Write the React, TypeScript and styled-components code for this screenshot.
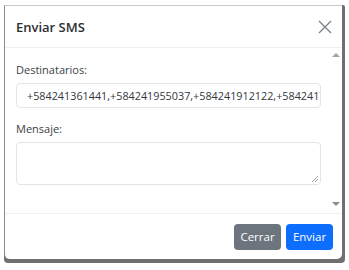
import React from 'react'
import styled, { createGlobalStyle } from 'styled-components'

const GlobalStyle = createGlobalStyle`
  html, body {
    margin: 0;
    padding: 0;
    background: #ffffff;
    font-family: 'Open Sans', 'Noto Sans', sans-serif;
    color: #212529;
  }
`

const Page = styled.div`
  width: 349px;
  height: 270px;
  padding: 5px 0 0 4px;
  box-sizing: border-box;
`

const Frame = styled.div`
  width: 341px;
  height: 258px;
  background: #6f6f6f;
  border-radius: 0 2px 4px 4px;
`

const Modal = styled.div`
  width: 338px;
  height: 254px;
  background: #ffffff;
  border-left: 1px solid #8a8a8a;
  border-top: 1px solid #c8c8c8;
  border-radius: 0 0 5px 5px;
  box-sizing: border-box;
  display: flex;
  flex-direction: column;
`

const Header = styled.div`
  height: 41px;
  flex: none;
  display: flex;
  align-items: center;
  justify-content: space-between;
  padding: 0 9px 0 11px;
  border-bottom: 1px solid #eef0f2;
`

const Title = styled.h5`
  margin: 0;
  font-size: 13px;
  font-weight: 600;
  color: #2b2f33;
`

const CloseButton = styled.button`
  width: 16px;
  height: 16px;
  padding: 0;
  border: none;
  background: transparent;
  display: flex;
  align-items: center;
  justify-content: center;
`

const Body = styled.div`
  flex: 1;
  display: flex;
  min-height: 0;
`

const Content = styled.div`
  flex: 1;
  min-width: 0;
  padding: 15px 9px 0 11px;
  display: flex;
  flex-direction: column;
`

const Label = styled.label`
  font-size: 11px;
  color: #3a3f44;
  margin-bottom: 6px;
  line-height: 14px;
`

const Input = styled.div`
  height: 25px;
  border: 1px solid #e2e5e8;
  border-radius: 4px;
  box-sizing: border-box;
  padding: 0 0 0 10px;
  font-size: 10.8px;
  color: #33383d;
  display: flex;
  align-items: center;
  white-space: nowrap;
  overflow: hidden;
  margin-bottom: 14px;
`

const TextArea = styled.div`
  position: relative;
  height: 43px;
  border: 1px solid #e2e5e8;
  border-radius: 4px;
  box-sizing: border-box;
`

const Grip = styled.svg`
  position: absolute;
  right: 2px;
  bottom: 2px;
`

const ScrollRail = styled.div`
  width: 12px;
  flex: none;
  display: flex;
  flex-direction: column;
  justify-content: space-between;
  align-items: center;
  padding: 5px 0 7px;
  box-sizing: border-box;
  background: #ffffff;
`

const Arrow = styled.div<{ $down?: boolean }>`
  width: 0;
  height: 0;
  border-left: 4px solid transparent;
  border-right: 4px solid transparent;
  ${(p) =>
    p.$down
      ? 'border-top: 4px solid #8d8d8d;'
      : 'border-bottom: 4px solid #a3a3a3;'}
`

const Footer = styled.div`
  height: 46px;
  flex: none;
  border-top: 1px solid #eef0f2;
  display: flex;
  align-items: center;
  justify-content: flex-end;
  gap: 5px;
  padding: 0 9px 0 0;
  box-sizing: border-box;
`

const Button = styled.button<{ $variant: 'secondary' | 'primary' }>`
  height: 26px;
  width: 47px;
  border: none;
  border-radius: 4px;
  color: #ffffff;
  font-family: 'Open Sans', 'Noto Sans', sans-serif;
  font-size: 11.5px;
  padding: 0;
  background: ${(p) => (p.$variant === 'primary' ? '#0d6efd' : '#6c757d')};
`

const numbers = '+584241361441,+584241955037,+584241912122,+584241752033'

export default function App() {
  return (
    <>
      <GlobalStyle />
      <Page>
        <Frame>
          <Modal>
            <Header>
              <Title>Enviar SMS</Title>
              <CloseButton aria-label='Cerrar'>
                <svg width='14' height='14' viewBox='0 0 14 14'>
                  <path
                    d='M1 1 L13 13 M13 1 L1 13'
                    stroke='#7a7f84'
                    strokeWidth='1.3'
                  />
                </svg>
              </CloseButton>
            </Header>
            <Body>
              <Content>
                <Label>Destinatarios:</Label>
                <Input>{numbers}</Input>
                <Label>Mensaje:</Label>
                <TextArea>
                  <Grip width='6' height='6' viewBox='0 0 6 6'>
                    <path d='M6 0 L0 6 M6 3 L3 6' stroke='#8a8a8a' strokeWidth='0.8' />
                  </Grip>
                </TextArea>
              </Content>
              <ScrollRail>
                <Arrow />
                <Arrow $down />
              </ScrollRail>
            </Body>
            <Footer>
              <Button $variant='secondary'>Cerrar</Button>
              <Button $variant='primary'>Enviar</Button>
            </Footer>
          </Modal>
        </Frame>
      </Page>
    </>
  )
}
